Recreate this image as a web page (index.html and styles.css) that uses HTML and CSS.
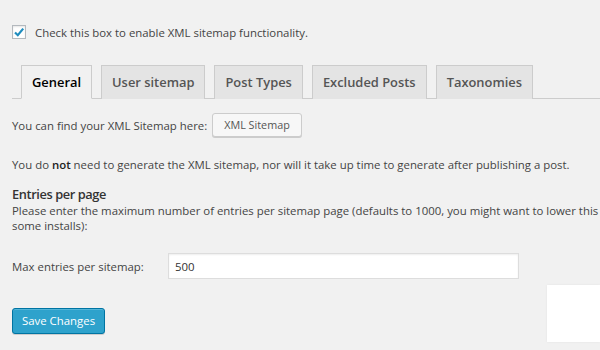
FILE: index.html
```html
<!DOCTYPE html>
<html>
<head>
    <meta charset="utf-8">
    <title>XML Sitemap</title>
    <link rel="stylesheet" href="styles.css">
</head>
<body>
    <div class="wrap">
        <label class="enable">
            <span class="check">
                <svg width="12" height="12" viewBox="0 0 12 12"><path d="M2 6.5 L4.8 9.2 L10.2 2.6" fill="none" stroke="#1e8cbe" stroke-width="2.2"/></svg>
            </span>
            Check this box to enable XML sitemap functionality.
        </label>

        <div class="tabs">
            <a class="tab active">General</a>
            <a class="tab">User sitemap</a>
            <a class="tab">Post Types</a>
            <a class="tab">Excluded Posts</a>
            <a class="tab">Taxonomies</a>
        </div>

        <div class="find">
            You can find your XML Sitemap here:
            <a class="btn">XML Sitemap</a>
        </div>

        <p class="note">You do <b>not</b> need to generate the XML sitemap, nor will it take up time to generate after publishing a post.</p>

        <h3>Entries per page</h3>
        <p class="desc">Please enter the maximum number of entries per sitemap page (defaults to 1000, you might want to lower this<br>some installs):</p>

        <div class="field">
            <label>Max entries per sitemap:</label>
            <input type="text" value="500">
        </div>

        <a class="save">Save Changes</a>
    </div>
    <div class="blank"></div>
</body>
</html>
```

FILE: styles.css
```css
* {
    margin: 0;
    padding: 0;
    box-sizing: border-box;
}
body {
    background: #f1f1f1;
    color: #444;
    font-family: "Open Sans", "Liberation Sans", sans-serif;
    font-size: 11.4px;
    width: 600px;
    height: 350px;
    overflow: hidden;
    position: relative;
}
.wrap {
    padding: 24px 0 0 12px;
}
.enable {
    display: flex;
    align-items: center;
    gap: 9px;
    height: 16px;
}
.check {
    width: 14px;
    height: 14px;
    background: #fff;
    border: 1px solid #b4b9be;
    box-shadow: inset 0 1px 2px rgba(0,0,0,0.1);
    display: flex;
    align-items: center;
    justify-content: center;
}
.tabs {
    display: flex;
    gap: 9px;
    margin-top: 25px;
    padding-left: 9px;
    border-bottom: 1px solid #ccc;
}
.tab {
    display: block;
    padding: 4px 10px;
    line-height: 24px;
    font-size: 12.9px;
    font-weight: 600;
    color: #555;
    background: #e4e4e4;
    border: 1px solid #ccc;
    border-bottom: none;
    margin-bottom: -1px;
    height: 34px;
}
.tab.active {
    background: #f1f1f1;
    color: #000;
    border-bottom: 1px solid #f1f1f1;
}
.find {
    display: flex;
    align-items: center;
    gap: 5px;
    margin-top: 14px;
}
.btn {
    display: block;
    height: 24px;
    line-height: 22px;
    padding: 0 11px;
    font-size: 10.8px;
    color: #555;
    background: #f7f7f7;
    border: 1px solid #ccc;
    border-radius: 3px;
    box-shadow: 0 1px 0 #ccc;
}
.note {
    line-height: 15px;
    margin-top: 20px;
}
.note b {
    color: #222;
    font-weight: 600;
}
h3 {
    font-size: 12.8px;
    line-height: 15px;
    font-weight: 600;
    letter-spacing: -0.4px;
    color: #333;
    margin-top: 15px;
}
.desc {
    line-height: 15px;
    margin-top: 1px;
    white-space: nowrap;
}
.field {
    display: flex;
    align-items: center;
    margin-top: 20px;
}
.field label {
    width: 156px;
}
.field input {
    width: 351px;
    height: 26px;
    border: 1px solid #ddd;
    box-shadow: inset 0 1px 2px rgba(0,0,0,0.07);
    background: #fff;
    font-family: inherit;
    font-size: 11.4px;
    color: #333;
    padding: 0 6px;
}
.save {
    display: inline-block;
    margin-top: 29px;
    height: 26px;
    line-height: 24px;
    padding: 0 9px;
    color: #fff;
    background: #2ea2cc;
    border: 1px solid #0074a2;
    border-radius: 3px;
    box-shadow: inset 0 1px 0 rgba(120,200,230,0.5), 0 1px 0 rgba(0,0,0,0.15);
}
.blank {
    position: absolute;
    left: 547px;
    top: 285px;
    width: 53px;
    height: 57px;
    background: #fff;
    box-shadow: 0 0 2px #e4e4e4;
}
```
